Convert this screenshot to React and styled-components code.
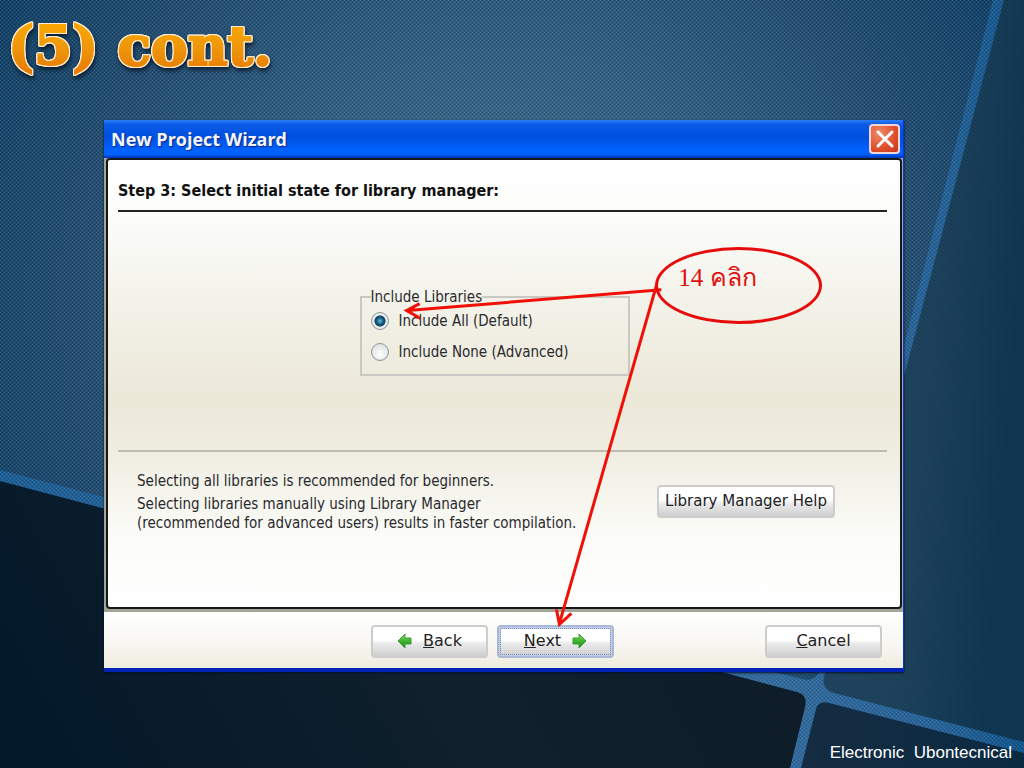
import { useState } from "react";

import styled, { createGlobalStyle } from "styled-components";

const choices = [
  { id: "all", label: "Include All (Default)" },
  { id: "none", label: "Include None (Advanced)" },
];

const Backdrop = () => (
  <BackdropSvg viewBox='0 0 1024 768' preserveAspectRatio='none' aria-hidden='true'>
    <defs>
      <radialGradient id='lit' gradientUnits='userSpaceOnUse' cx='500' cy='300' r='620'>
        <stop offset='0' stopColor='#44708f' />
        <stop offset='0.4' stopColor='#345f80' />
        <stop offset='0.7' stopColor='#244d70' />
        <stop offset='1' stopColor='#0f3f63' />
      </radialGradient>
      <linearGradient id='side' x1='0' y1='0' x2='1' y2='0.3'>
        <stop offset='0' stopColor='#1f4360' />
        <stop offset='0.6' stopColor='#1c4059' />
        <stop offset='1' stopColor='#0f344f' />
      </linearGradient>
      <linearGradient id='dark' x1='0' y1='0.6' x2='1' y2='0.4'>
        <stop offset='0' stopColor='#04192a' />
        <stop offset='0.5' stopColor='#10202c' />
        <stop offset='1' stopColor='#0d1c28' />
      </linearGradient>
      <linearGradient id='corner' x1='0' y1='0' x2='1' y2='0'>
        <stop offset='0' stopColor='#152c42' />
        <stop offset='1' stopColor='#0a2a42' />
      </linearGradient>
      <linearGradient id='strip' x1='0' y1='0' x2='1' y2='0'>
        <stop offset='0' stopColor='#1f5e93' />
        <stop offset='0.75' stopColor='#346b9c' />
        <stop offset='0.92' stopColor='#276296' />
        <stop offset='1' stopColor='#13558a' />
      </linearGradient>
      <pattern id='weave' width='4' height='4' patternUnits='userSpaceOnUse'>
        <rect width='1' height='1' fill='#9fc4df' />
        <rect x='2' y='2' width='1' height='1' fill='#9fc4df' />
        <rect x='2' width='1' height='1' fill='#001a30' />
        <rect y='2' width='1' height='1' fill='#001a30' />
      </pattern>
    </defs>
    <rect width='1024' height='768' fill='url(#strip)' />
    <path d='M0 0H993L822 664Q818 683 802 679L0 470Z' fill='url(#lit)' />
    <rect width='1024' height='768' fill='url(#weave)' opacity='0.16' />
    <path d='M1004 0H1024V742L834 693Q821 689 824 677Z' fill='url(#side)' />
    <path d='M1004 0H1024V742L834 693Q821 689 824 677Z' fill='url(#weave)' opacity='0.08' />
    <path d='M0 481L797 692Q808 695 805 707L790 768H0Z' fill='url(#dark)' />
    <path d='M801 768L816 709Q819 700 829 703L1024 753V768Z' fill='url(#corner)' />
  </BackdropSvg>
);

const ArrowIcon = ({ flip }) => (
  <Arrow viewBox='0 0 16 16' $flip={flip} aria-hidden='true'>
    <defs>
      <linearGradient id='leaf' x1='0' y1='0' x2='0' y2='1'>
        <stop offset='0' stopColor='#8ee06a' />
        <stop offset='0.5' stopColor='#3fb52c' />
        <stop offset='1' stopColor='#1f8a1c' />
      </linearGradient>
    </defs>
    <path
      d='M1 8L8 1V5H14V11H8V15Z'
      fill='url(#leaf)'
      stroke='#3a9a34'
      strokeLinejoin='round'
    />
  </Arrow>
);

const App = () => {
  const [selected, setSelected] = useState("all");

  return (
    <>
      <GlobalStyle />
      <Slide>
        <Backdrop />
        <Heading>(5) cont.</Heading>
        <Window>
          <TitleBar>
            <WindowTitle>New Project Wizard</WindowTitle>
            <CloseButton type='button' aria-label='Close'>
              <svg viewBox='0 0 20 20' width='20' height='20'>
                <path
                  d='M3 3L17 17M17 3L3 17'
                  stroke='#fff'
                  strokeWidth='3'
                  strokeLinecap='round'
                />
              </svg>
            </CloseButton>
          </TitleBar>
          <Frame>
            <Page>
              <StepTitle>Step 3: Select initial state for library manager:</StepTitle>
              <Options>
                <Group>
                  <Legend>Include Libraries</Legend>
                  {choices.map(({ id, label }) => (
                    <Choice key={id} htmlFor={id}>
                      <Radio
                        type='radio'
                        id={id}
                        name='libraries'
                        checked={selected === id}
                        onChange={() => setSelected(id)}
                      />
                      {label}
                    </Choice>
                  ))}
                </Group>
              </Options>
              <Notes>
                <div>
                  <Note>Selecting all libraries is recommended for beginners.</Note>
                  <Note>
                    Selecting libraries manually using Library Manager
                    <br />
                    (recommended for advanced users) results in faster compilation.
                  </Note>
                </div>
                <HelpButton type='button'>Library Manager Help</HelpButton>
              </Notes>
            </Page>
          </Frame>
          <Footer>
            <Button type='button'>
              <ArrowIcon />
              <span>
                <u>B</u>ack
              </span>
            </Button>
            <Button type='button' $focused>
              <span>
                <u>N</u>ext
              </span>
              <ArrowIcon flip />
            </Button>
            <CancelButton type='button'>
              <span>
                <u>C</u>ancel
              </span>
            </CancelButton>
          </Footer>
          <Pointers viewBox='0 0 800 552' preserveAspectRatio='none' aria-hidden='true'>
            <path d='M558 171L304 192M316 185L303 192L317 200' />
            <path d='M553 167L456 507M453 493L456 508L468 497' />
          </Pointers>
          <Callout>14 คลิก</Callout>
        </Window>
        <Credit>Electronic  Ubontecnical</Credit>
      </Slide>
    </>
  );
};

const GlobalStyle = createGlobalStyle`
  * {
    box-sizing: border-box;
  }

  body {
    margin: 0;
    font-family: "DejaVu Sans Condensed", "DejaVu Sans", sans-serif;
    font-size: 15px;
    color: #2a2a2e;
  }
`;

const Slide = styled.main`
  position: relative;
  display: flex;
  flex-direction: column;
  min-height: 100vh;
  overflow: hidden;
  padding: 12px 120px 4px 104px;
`;

const BackdropSvg = styled.svg`
  position: absolute;
  inset: 0;
  width: 100%;
  height: 100%;
  z-index: -1;
`;

const Heading = styled.h1`
  align-self: flex-start;
  height: 108px;
  margin: 0 0 0 -96px;
  font-family: "DejaVu Serif", serif;
  font-size: 55px;
  font-weight: 700;
  line-height: 68px;
  color: transparent;
  background: linear-gradient(#fba900 10px, #ee960c 36px, #e87c00 60px);
  background-clip: text;
  -webkit-text-stroke: 2px transparent;
  filter: drop-shadow(1px 0 0 #ffeed2) drop-shadow(-1px 0 0 #ffeed2)
    drop-shadow(0 1px 0 #ffeed2) drop-shadow(0 -1px 0 #ffeed2)
    drop-shadow(1px 3px 2px rgba(0, 10, 25, 0.7));
`;

const Window = styled.section`
  position: relative;
  border-bottom: 4px solid #0223b4;
  border-right: 1px solid #0a35d0;
  box-shadow: 0 1px 2px #05102a;
`;

const TitleBar = styled.header`
  display: flex;
  align-items: center;
  justify-content: space-between;
  height: 38px;
  padding: 0 3px 0 7px;
  background: linear-gradient(
    #2a7df5,
    #0a5ae8 12%,
    #0050e0 45%,
    #0062ff 80%,
    #0062fa 90%,
    #0034b8
  );
`;

const WindowTitle = styled.h2`
  margin: 0;
  font-family: "Open Sans", sans-serif;
  font-size: 18px;
  font-weight: 700;
  color: #f4f4ff;
  text-shadow: 1px 1px 1px #0a2a80;
`;

const CloseButton = styled.button`
  display: grid;
  place-items: center;
  width: 31px;
  height: 30px;
  padding: 0;
  border: 2px solid #f3d5d8;
  border-radius: 4px;
  background: radial-gradient(circle at 30% 25%, #ee8a68, #df4f2c 60%, #c4381a);
`;

const Frame = styled.div`
  padding: 0 1px 3px 2px;
  background: #a3a597;
`;

const Page = styled.div`
  border: 2px solid #181818;
  border-radius: 4px;
  padding: 0 13px 0 10px;
  background: linear-gradient(
    #fff,
    #fdfdfc 10%,
    #f3f2e9 32%,
    #ebe8d8 54%,
    #f0eee2 66%,
    #fbfbf8 84%,
    #fff
  );
`;

const StepTitle = styled.h3`
  height: 52px;
  margin: 0;
  border-bottom: 2px solid #222;
  font-size: 16px;
  font-weight: 700;
  line-height: 62px;
  color: #111;
`;

const Options = styled.div`
  display: flex;
  justify-content: center;
  height: 240px;
  padding: 76px 16px 0 0;
  border-bottom: 2px solid #bdbbad;
`;

const Group = styled.fieldset`
  display: flex;
  flex-direction: column;
  width: 270px;
  height: 88px;
  margin: 0;
  padding: 0 9px;
  border: 2px solid #c9c9c3;
`;

const Legend = styled.legend`
  padding: 0;
  line-height: 18px;
`;

const Choice = styled.label`
  display: flex;
  align-items: center;
  gap: 10px;
  height: 32px;
  margin-top: -1px;
`;

const Radio = styled.input`
  appearance: none;
  width: 18px;
  height: 18px;
  margin: 0;
  border: 1px solid #8e959b;
  border-radius: 50%;
  background: radial-gradient(circle at 50% 65%, #fff, #d4d8da);
  box-shadow: inset 0 0 0 1px #e6e8e8;

  &:checked {
    background: radial-gradient(
      circle at 50% 50%,
      #6fc4dc,
      #17648a 3px,
      #0e3f60 5px,
      #e8eef0 6px
    );
  }
`;

const Notes = styled.div`
  display: flex;
  align-items: flex-start;
  justify-content: space-between;
  height: 155px;
  padding: 20px 52px 0 19px;
`;

const Note = styled.p`
  margin: 0 0 4px;
  line-height: 19px;
`;

const Button = styled.button`
  display: flex;
  align-items: center;
  justify-content: center;
  gap: 10px;
  width: 117px;
  height: 33px;
  padding: 0 0 2px;
  border: 2px solid ${({ $focused }) => ($focused ? "#a9b8d6" : "#cdcdcd")};
  border-radius: 4px;
  background: linear-gradient(#fff 45%, #ececee 55%, #cfcfcf);
  font-family: "DejaVu Sans", sans-serif;
  font-size: 16px;
  color: #222;
  ${({ $focused }) =>
    $focused &&
    "box-shadow: inset 0 0 0 2px #c3cee4; outline: 1px dotted #7d8fb8; outline-offset: -4px;"}
`;

const HelpButton = styled(Button)`
  width: 178px;
  margin-top: 13px;
  font-size: 15px;
`;

const CancelButton = styled(Button)`
  margin-left: auto;
`;

const Arrow = styled.svg`
  width: 16px;
  height: 16px;
  transform: ${({ $flip }) => ($flip ? "scaleX(-1)" : "none")};
`;

const Footer = styled.footer`
  display: flex;
  gap: 9px;
  height: 56px;
  padding: 13px 21px 0 267px;
  background: linear-gradient(#fff, #f9f8f4 50%, #efecdf);
`;

const Pointers = styled.svg`
  position: absolute;
  inset: 0;
  width: 100%;
  height: 100%;
  fill: none;
  stroke: #f01008;
  stroke-width: 3px;
  pointer-events: none;
`;

const Callout = styled.div`
  position: absolute;
  top: 127px;
  left: 69%;
  width: 167px;
  height: 77px;
  padding-left: 20px;
  border: 3px solid #e60c0c;
  border-radius: 50%;
  font-family: "Liberation Serif", serif;
  font-size: 25px;
  line-height: 56px;
  color: #e01010;
`;

const Credit = styled.p`
  align-self: flex-end;
  margin: auto -108px 0 0;
  font-family: "Liberation Sans", sans-serif;
  font-size: 17px;
  line-height: 22px;
  white-space: pre;
  color: #fff;
`;

export default App;
